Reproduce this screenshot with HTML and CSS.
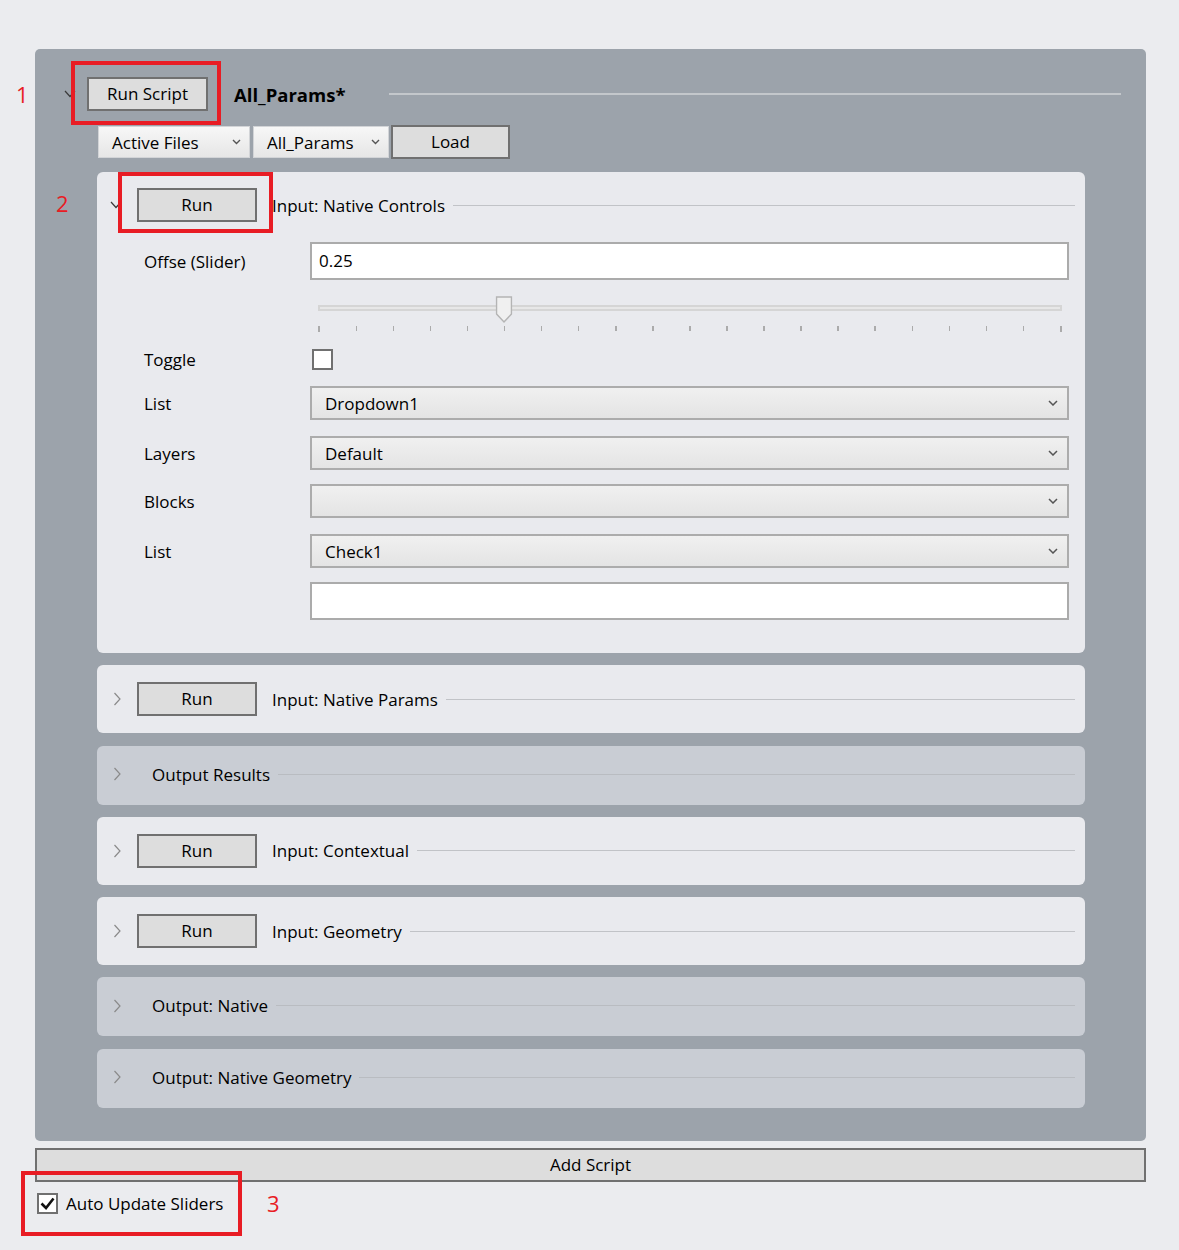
FILE: index.html
```html
<!DOCTYPE html>
<html lang="en">
<head>
<meta charset="utf-8">
<title>Script Panel</title>
<link rel="stylesheet" href="styles.css">
</head>
<body>
<div class="app">
  <section class="panel">
    <div class="script-head">
      <svg class="chev-down" width="12" height="8" viewBox="0 0 12 8"><polyline points="1,1 6,6.5 11,1" fill="none" stroke="#3a3a3a" stroke-width="1.2"/></svg>
      <button class="btn btn-runscript">Run Script</button>
      <span class="script-title">All_Params*</span>
      <span class="rule rule-head"></span>
    </div>

    <div class="file-row">
      <div class="combo combo-files"><span>Active Files</span><svg width="9" height="6" viewBox="0 0 9 6"><polyline points="1,1 4.5,4.5 8,1" fill="none" stroke="#555" stroke-width="1.4"/></svg></div>
      <div class="combo combo-params"><span>All_Params</span><svg width="9" height="6" viewBox="0 0 9 6"><polyline points="1,1 4.5,4.5 8,1" fill="none" stroke="#555" stroke-width="1.4"/></svg></div>
      <button class="btn btn-load">Load</button>
    </div>

    <div class="cards">
      <div class="card card-light card-open">
        <div class="card-head">
          <svg class="chev" width="12" height="8" viewBox="0 0 12 8"><polyline points="1,1 6,6.5 11,1" fill="none" stroke="#3a3a3a" stroke-width="1.2"/></svg>
          <button class="btn btn-run">Run</button>
          <span class="card-title">Input: Native Controls</span>
          <span class="rule"></span>
        </div>
        <div class="card-body">
          <div class="row row-input">
            <span class="label">Offse (Slider)</span>
            <div class="textbox">0.25</div>
          </div>
          <div class="row row-slider">
            <span class="label"></span>
            <div class="slider">
              <div class="track"></div>
              <svg class="thumb" style="left: 25%" width="17" height="28" viewBox="0 0 17 28"><path d="M1 1 H16 V18 L8.5 26 L1 18 Z" fill="#f0f0f0" stroke="#b4b4b4" stroke-width="1.5"/></svg>
              <div class="ticks">
                <i class="end"></i><i></i><i></i><i></i><i></i><i></i><i></i><i></i><i></i><i></i><i></i><i></i><i></i><i></i><i></i><i></i><i></i><i></i><i></i><i></i><i class="end"></i>
              </div>
            </div>
          </div>
          <div class="row row-toggle">
            <span class="label">Toggle</span>
            <div class="control"><span class="checkbox"></span></div>
          </div>
          <div class="row row-select">
            <span class="label">List</span>
            <div class="select"><span>Dropdown1</span><svg width="10" height="6" viewBox="0 0 10 6"><polyline points="1,1 5,5 9,1" fill="none" stroke="#555" stroke-width="1.5"/></svg></div>
          </div>
          <div class="row row-select">
            <span class="label">Layers</span>
            <div class="select"><span>Default</span><svg width="10" height="6" viewBox="0 0 10 6"><polyline points="1,1 5,5 9,1" fill="none" stroke="#555" stroke-width="1.5"/></svg></div>
          </div>
          <div class="row row-select row-tight">
            <span class="label">Blocks</span>
            <div class="select"><span></span><svg width="10" height="6" viewBox="0 0 10 6"><polyline points="1,1 5,5 9,1" fill="none" stroke="#555" stroke-width="1.5"/></svg></div>
          </div>
          <div class="row row-select">
            <span class="label">List</span>
            <div class="select"><span>Check1</span><svg width="10" height="6" viewBox="0 0 10 6"><polyline points="1,1 5,5 9,1" fill="none" stroke="#555" stroke-width="1.5"/></svg></div>
          </div>
          <div class="row row-input row-tight">
            <span class="label"></span>
            <div class="textbox"></div>
          </div>
        </div>
      </div>

      <div class="card card-light">
        <div class="card-head">
          <svg class="chev" width="12" height="14" viewBox="0 0 12 14"><polyline points="4.5,1 10,7 4.5,13" fill="none" stroke="#8a8a8a" stroke-width="1.2"/></svg>
          <button class="btn btn-run">Run</button>
          <span class="card-title">Input: Native Params</span>
          <span class="rule"></span>
        </div>
      </div>

      <div class="card card-dark">
        <div class="card-head card-head-out">
          <svg class="chev" width="12" height="14" viewBox="0 0 12 14"><polyline points="4.5,1 10,7 4.5,13" fill="none" stroke="#8a8a8a" stroke-width="1.2"/></svg>
          <span class="card-title out-title">Output Results</span>
          <span class="rule"></span>
        </div>
      </div>

      <div class="card card-light">
        <div class="card-head">
          <svg class="chev" width="12" height="14" viewBox="0 0 12 14"><polyline points="4.5,1 10,7 4.5,13" fill="none" stroke="#8a8a8a" stroke-width="1.2"/></svg>
          <button class="btn btn-run">Run</button>
          <span class="card-title">Input: Contextual</span>
          <span class="rule"></span>
        </div>
      </div>

      <div class="card card-light">
        <div class="card-head">
          <svg class="chev" width="12" height="14" viewBox="0 0 12 14"><polyline points="4.5,1 10,7 4.5,13" fill="none" stroke="#8a8a8a" stroke-width="1.2"/></svg>
          <button class="btn btn-run">Run</button>
          <span class="card-title">Input: Geometry</span>
          <span class="rule"></span>
        </div>
      </div>

      <div class="card card-dark">
        <div class="card-head card-head-out">
          <svg class="chev" width="12" height="14" viewBox="0 0 12 14"><polyline points="4.5,1 10,7 4.5,13" fill="none" stroke="#8a8a8a" stroke-width="1.2"/></svg>
          <span class="card-title out-title">Output: Native</span>
          <span class="rule"></span>
        </div>
      </div>

      <div class="card card-dark">
        <div class="card-head card-head-out">
          <svg class="chev" width="12" height="14" viewBox="0 0 12 14"><polyline points="4.5,1 10,7 4.5,13" fill="none" stroke="#8a8a8a" stroke-width="1.2"/></svg>
          <span class="card-title out-title">Output: Native Geometry</span>
          <span class="rule"></span>
        </div>
      </div>
    </div>
  </section>

  <button class="btn btn-add">Add Script</button>

  <div class="auto-row">
    <span class="checkbox checked"><svg width="17" height="17" viewBox="0 0 17 17"><polyline points="2.5,8.5 7,13 14.5,3.5" fill="none" stroke="#111" stroke-width="2.6"/></svg></span>
    <span class="auto-label">Auto Update Sliders</span>
  </div>

  <div class="annot box-1"></div>
  <div class="annot box-2"></div>
  <div class="annot box-3"></div>
  <span class="annot-num num-1">1</span>
  <span class="annot-num num-2">2</span>
  <span class="annot-num num-3">3</span>
</div>
</body>
</html>
```

FILE: styles.css
```css
* { box-sizing: border-box; }

html, body {
  margin: 0;
  background: #ebecef;
}

body {
  font-family: "Open Sans", "Noto Sans", "Liberation Sans", sans-serif;
  font-size: 17px;
  color: #000;
}

.app {
  position: relative;
  padding: 49px 33px 0 35px;
  min-height: 1250px;
}

/* Outer script panel */
.panel {
  background: #9ca3ab;
  border-radius: 5px;
  padding: 28px 0 33px 0;
}

.script-head {
  display: flex;
  align-items: center;
  height: 34px;
  padding: 0 25px 0 29px;
}

.chev-down { flex: none; }

.btn {
  font-family: inherit;
  font-size: 17px;
  color: #000;
  background: #dddddd;
  border: 2px solid #707070;
  border-radius: 0;
  padding: 0;
  height: 34px;
  line-height: 28px;
}

.btn-runscript {
  margin-left: 11px;
  width: 121px;
}

.script-title {
  margin-left: 26px;
  font-weight: 700;
  font-size: 18.5px;
  color: #000;
}

.rule {
  flex: 1;
  height: 1px;
  background: #c1c3c7;
  margin-left: 8px;
}

.rule-head {
  margin-left: 44px;
  height: 2px;
  background: #c3c7cb;
}

/* File row */
.file-row {
  display: flex;
  align-items: center;
  height: 34px;
  margin-top: 14px;
  padding-left: 63px;
}

.combo {
  height: 32px;
  display: flex;
  align-items: center;
  justify-content: space-between;
  padding: 0 8px 0 13px;
  background: linear-gradient(#f7f7f7, #e6e6e6);
  border: 1px solid #d2d4d7;
}

.combo-files { width: 152px; }
.combo-params { width: 136px; margin-left: 3px; }

.btn-load {
  width: 119px;
  margin-left: 2px;
}

/* Cards */
.cards {
  margin-top: 13px;
  padding: 0 61px 0 62px;
  display: flex;
  flex-direction: column;
  gap: 12.3px;
}

.card {
  border-radius: 6px;
  padding: 17px 10px 17px 13px;
}

.card-light { background: #e9eaee; }
.card-dark { background: #c9cdd4; padding: 16px 10px 18px 13px; }
.card-dark .rule { background: #b9bcc1; }

.card-open { padding: 16px 10px 33px 13px; }

.card-head {
  display: flex;
  align-items: center;
  height: 34px;
}

.card-head-out { height: 25px; }

.chev { flex: none; }

.btn-run {
  width: 120px;
  margin-left: 15px;
}

.card-title {
  margin-left: 15px;
  white-space: nowrap;
}

.out-title { margin-left: 30px; }

/* Expanded card body */
.card-body {
  margin-top: 20px;
  padding: 0 6px 0 34px;
}

.row {
  display: flex;
  align-items: center;
}

.label {
  width: 166px;
  flex: none;
}

.row-input { height: 38px; }
.row-slider { height: 42px; margin-top: 12px; }
.row-toggle { height: 21px; margin-top: 15px; }
.row-select { height: 34px; margin-top: 16px; }
.row-input.row-tight, .row-select.row-tight { margin-top: 14px; }

.textbox {
  flex: 1;
  height: 38px;
  background: #fff;
  border: 2px solid #ababab;
  padding-left: 7px;
  line-height: 34px;
}

.select {
  flex: 1;
  height: 34px;
  display: flex;
  align-items: center;
  justify-content: space-between;
  padding: 0 9px 0 13px;
  background: linear-gradient(#f0f0f0, #e4e4e4);
  border: 2px solid #acacac;
}

.control { flex: 1; }

.checkbox {
  display: block;
  width: 21px;
  height: 21px;
  background: #fff;
  border: 2px solid #707070;
  margin-left: 2px;
}

/* Slider */
.slider {
  flex: 1;
  position: relative;
  align-self: stretch;
  margin: 0 7px 0 8px;
}

.track {
  margin-top: 13px;
  height: 6px;
  border: 2px solid #d5d5d5;
  background: #e7e7e7;
}

.thumb {
  position: absolute;
  top: 4px;
  transform: translateX(-50%);
}

.ticks {
  margin-top: 15px;
  display: flex;
  justify-content: space-between;
  align-items: flex-start;
}

.ticks i {
  display: block;
  width: 1.5px;
  height: 5px;
  background: #ababab;
}

.ticks i.end { height: 6px; width: 2px; }

/* Bottom */
.btn-add {
  display: block;
  width: 100%;
  margin-top: 7px;
}

.auto-row {
  display: flex;
  align-items: center;
  height: 21px;
  margin-top: 11px;
  padding-left: 2px;
}

.auto-row .checkbox {
  margin-left: 0;
  display: flex;
  align-items: center;
  justify-content: center;
}

.auto-label {
  margin-left: 8px;
}

/* Annotation overlays */
.annot {
  position: absolute;
  border: 4px solid #e81c24;
}

.box-1 { left: 71px; top: 61px; width: 150px; height: 64px; }
.box-2 { left: 118px; top: 172px; width: 155px; height: 61px; }
.box-3 { left: 21px; top: 1171px; width: 221px; height: 65px; }

.annot-num {
  position: absolute;
  color: #e81c24;
  font-size: 22px;
  line-height: 24px;
  height: 24px;
}

.num-1 { left: 16px; top: 82px; }
.num-2 { left: 56px; top: 191px; }
.num-3 { left: 267px; top: 1191px; }
```
